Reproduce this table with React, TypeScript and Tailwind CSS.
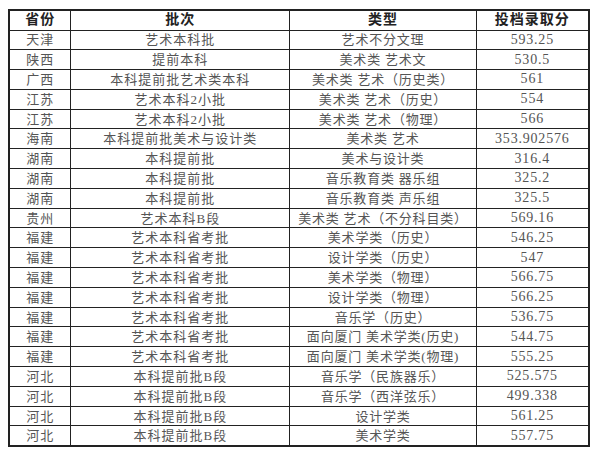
const rows: [string, string, string, string][] = [
  ["天津", "艺术本科批", "艺术不分文理", "593.25"],
  ["陕西", "提前本科", "美术类 艺术文", "530.5"],
  ["广西", "本科提前批艺术类本科", "美术类 艺术（历史类）", "561"],
  ["江苏", "艺术本科2小批", "美术类 艺术（历史）", "554"],
  ["江苏", "艺术本科2小批", "美术类 艺术（物理）", "566"],
  ["海南", "本科提前批美术与设计类", "美术类 艺术", "353.902576"],
  ["湖南", "本科提前批", "美术与设计类", "316.4"],
  ["湖南", "本科提前批", "音乐教育类 器乐组", "325.2"],
  ["湖南", "本科提前批", "音乐教育类 声乐组", "325.5"],
  ["贵州", "艺术本科B段", "美术类 艺术（不分科目类）", "569.16"],
  ["福建", "艺术本科省考批", "美术学类（历史）", "546.25"],
  ["福建", "艺术本科省考批", "设计学类（历史）", "547"],
  ["福建", "艺术本科省考批", "美术学类（物理）", "566.75"],
  ["福建", "艺术本科省考批", "设计学类（物理）", "566.25"],
  ["福建", "艺术本科省考批", "音乐学（历史）", "536.75"],
  ["福建", "艺术本科省考批", "面向厦门 美术学类(历史)", "544.75"],
  ["福建", "艺术本科省考批", "面向厦门 美术学类(物理)", "555.25"],
  ["河北", "本科提前批B段", "音乐学（民族器乐）", "525.575"],
  ["河北", "本科提前批B段", "音乐学（西洋弦乐）", "499.338"],
  ["河北", "本科提前批B段", "设计学类", "561.25"],
  ["河北", "本科提前批B段", "美术学类", "557.75"],
];

const cjk = "font-['Liberation_Serif','Noto_Sans_CJK_SC',serif]";

export default function App() {
  return (
    <div className="w-[600px] h-[455px] bg-white pt-[9px] pl-[8px]">
      <table
        className={`w-[582px] border-collapse border-2 border-[#222] text-center ${cjk}`}
      >
        <colgroup>
          <col className="w-[62px]" />
          <col className="w-[220px]" />
          <col className="w-[187px]" />
          <col className="w-[113px]" />
        </colgroup>
        <thead>
          <tr className="h-[20px] text-[14px] font-bold text-[#222] tracking-[1px] leading-none">
            <th className="border border-[#222] p-0">省份</th>
            <th className="border border-[#222] p-0">批次</th>
            <th className="border border-[#222] p-0">类型</th>
            <th className="border border-[#222] p-0">投档录取分</th>
          </tr>
        </thead>
        <tbody className="text-[13px] text-[#555] leading-none">
          {rows.map((r, i) => (
            <tr key={i} className="h-[19.8px]">
              <td className="border border-[#222] p-0 tracking-[1px]">{r[0]}</td>
              <td className="border border-[#222] p-0 tracking-[1px]">{r[1]}</td>
              <td className="border border-[#222] p-0 tracking-[0.8px]">{r[2]}</td>
              <td className="border border-[#222] p-0 text-[14px] tracking-[0.8px]">
                {r[3]}
              </td>
            </tr>
          ))}
        </tbody>
      </table>
    </div>
  );
}
